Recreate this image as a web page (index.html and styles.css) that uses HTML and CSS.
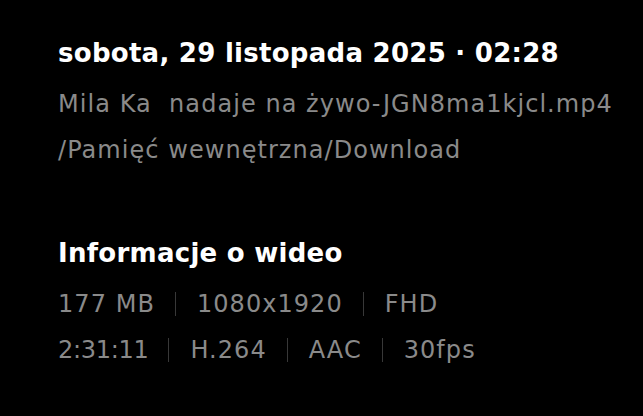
FILE: index.html
```html
<!DOCTYPE html>
<html lang="pl">
<head>
<meta charset="utf-8">
<link rel="stylesheet" href="styles.css">
</head>
<body>
<main class="page">
  <section class="block">
    <h1 class="title">sobota, 29 listopada 2025 · 02:28</h1>
    <p class="line">Mila Ka&nbsp; nadaje na żywo-JGN8ma1kjcl.mp4</p>
    <p class="line">/Pamięć wewnętrzna/Download</p>
  </section>
  <section class="block info">
    <h2 class="title">Informacje o wideo</h2>
    <div class="line row"><span>177 MB</span><i class="sep"></i><span>1080x1920</span><i class="sep"></i><span>FHD</span></div>
    <div class="line row"><span class="tight">2:31:11</span><i class="sep"></i><span>H.264</span><i class="sep"></i><span>AAC</span><i class="sep"></i><span>30fps</span></div>
  </section>
</main>
</body>
</html>
```
FILE: styles.css
```css
html, body {
  margin: 0;
  padding: 0;
  background: #000;
}
body {
  width: 643px;
  height: 416px;
  overflow: hidden;
  font-family: "DejaVu Sans", sans-serif;
}
.page {
  padding: 31px 0 0 58px;
  display: flex;
  flex-direction: column;
  gap: 58px;
}
.block {
  display: flex;
  flex-direction: column;
}
.title {
  margin: 0 0 6px;
  font-size: 26px;
  font-weight: 700;
  letter-spacing: 0.27px;
  color: #fff;
  line-height: 44px;
}
.line {
  margin: 0;
  font-size: 24px;
  letter-spacing: 1.05px;
  line-height: 46px;
  color: #8a8a8a;
}
.row {
  display: flex;
  align-items: center;
}
.tight {
  letter-spacing: -0.3px;
}
.sep {
  display: block;
  width: 1px;
  height: 24px;
  background: #383838;
  margin: 0 21px 0 20px;
}
```
